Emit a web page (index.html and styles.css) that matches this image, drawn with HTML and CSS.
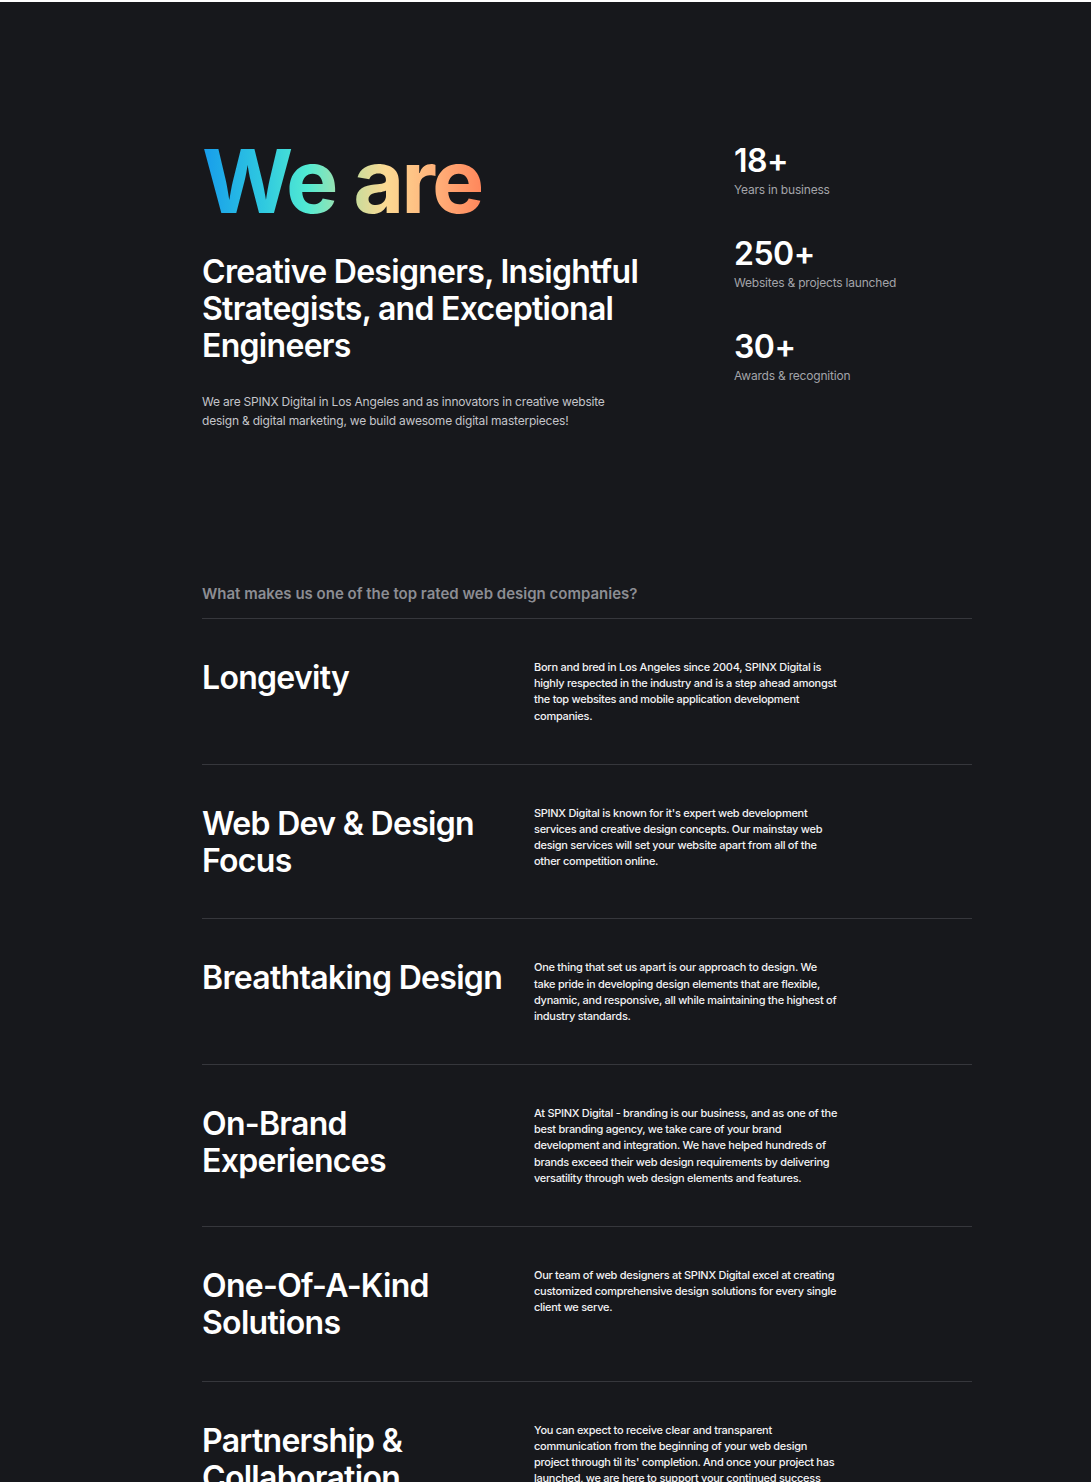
FILE: index.html
```html
<!DOCTYPE html>
<html lang="en">
<head>
<meta charset="utf-8">
<title>SPINX Digital - We are</title>
<link rel="stylesheet" href="styles.css">
</head>
<body>
<main class="page">
  <section class="hero">
    <div class="hero-main">
      <h1 class="hero-title">We are</h1>
      <h2 class="hero-sub">Creative Designers, Insightful Strategists, and Exceptional Engineers</h2>
      <p class="hero-text">We are SPINX Digital in Los Angeles and as innovators in creative website design &amp; digital marketing, we build awesome digital masterpieces!</p>
    </div>
    <ul class="stats">
      <li class="stat"><span class="stat-num">18+</span><span class="stat-label">Years in business</span></li>
      <li class="stat"><span class="stat-num">250+</span><span class="stat-label">Websites &amp; projects launched</span></li>
      <li class="stat"><span class="stat-num">30+</span><span class="stat-label">Awards &amp; recognition</span></li>
    </ul>
  </section>

  <section class="why">
    <h3 class="why-title">What makes us one of the top rated web design companies?</h3>
    <div class="row">
      <h4 class="row-title">Longevity</h4>
      <p class="row-text">Born and bred in Los Angeles since 2004, SPINX Digital is highly respected in the industry and is a step ahead amongst the top websites and mobile application development companies.</p>
    </div>
    <div class="row">
      <h4 class="row-title">Web Dev &amp; Design Focus</h4>
      <p class="row-text">SPINX Digital is known for it's expert web development services and creative design concepts. Our mainstay web design services will set your website apart from all of the other competition online.</p>
    </div>
    <div class="row">
      <h4 class="row-title">Breathtaking Design</h4>
      <p class="row-text">One thing that set us apart is our approach to design. We take pride in developing design elements that are flexible, dynamic, and responsive, all while maintaining the highest of industry standards.</p>
    </div>
    <div class="row">
      <h4 class="row-title">On-Brand Experiences</h4>
      <p class="row-text">At SPINX Digital - branding is our business, and as one of the best branding agency, we take care of your brand development and integration. We have helped hundreds of brands exceed their web design requirements by delivering versatility through web design elements and features.</p>
    </div>
    <div class="row">
      <h4 class="row-title">One-Of-A-Kind Solutions</h4>
      <p class="row-text">Our team of web designers at SPINX Digital excel at creating customized comprehensive design solutions for every single client we serve.</p>
    </div>
    <div class="row">
      <h4 class="row-title">Partnership &amp; Collaboration</h4>
      <p class="row-text">You can expect to receive clear and transparent communication from the beginning of your web design project through til its' completion. And once your project has launched, we are here to support your continued success with ongoing maintenance and updates.</p>
    </div>
  </section>
</main>
</body>
</html>
```

FILE: styles.css
```css
* { box-sizing: border-box; }

html, body {
  margin: 0;
  padding: 0;
}

body {
  background: #17181c;
  border-top: 2px solid #ffffff;
  color: #ffffff;
  font-family: Inter, "Noto Sans", "Liberation Sans", sans-serif;
}

.page {
  width: 770px;
  margin-left: 202px;
  padding-top: 135px;
}

.hero {
  display: flex;
  align-items: flex-start;
}

.hero-main {
  width: 532px;
}

.hero-title {
  margin: 0;
  font-size: 88px;
  line-height: 88px;
  font-weight: 700;
  letter-spacing: -3px;
  display: inline-block;
  background: linear-gradient(90deg, #179ceb 0%, #2fc9e0 22%, #52ead2 38%, #c9dc9c 55%, #fcd993 66%, #ffb079 84%, #ff875c 100%);
  -webkit-background-clip: text;
  background-clip: text;
  color: transparent;
}

.hero-sub {
  margin: 28px 0 0;
  font-size: 32px;
  line-height: 37px;
  font-weight: 600;
  letter-spacing: -0.7px;
  width: 450px;
}

.hero-text {
  margin: 28px 0 0;
  font-size: 12px;
  line-height: 19px;
  letter-spacing: -0.2px;
  color: #c4c5ca;
  width: 420px;
}

.stats {
  list-style: none;
  margin: 0;
  padding: 5px 0 0;
  display: flex;
  flex-direction: column;
  gap: 36px;
}

.stat {
  display: flex;
  flex-direction: column;
  gap: 1px;
}

.stat-num {
  font-size: 32px;
  line-height: 38px;
  font-weight: 600;
  letter-spacing: -0.5px;
}

.stat-label {
  font-size: 12px;
  line-height: 18px;
  letter-spacing: -0.2px;
  color: #a3a4a9;
}

.why {
  margin-top: 154px;
}

.why-title {
  margin: 0;
  padding-bottom: 14px;
  font-size: 15px;
  line-height: 20px;
  font-weight: 600;
  color: #8c8d93;
  border-bottom: 1px solid #36373c;
}

.row {
  display: grid;
  grid-template-columns: 332px 306px;
  padding: 40px 0 39.8px;
  border-bottom: 1px solid #36373c;
}

.row-title {
  margin: 0;
  font-size: 32px;
  line-height: 37px;
  font-weight: 600;
  letter-spacing: -0.7px;
}

.row-text {
  margin: 0;
  font-size: 11px;
  line-height: 16.2px;
  font-weight: 500;
  letter-spacing: -0.28px;
  color: #f2f2f4;
}
```
